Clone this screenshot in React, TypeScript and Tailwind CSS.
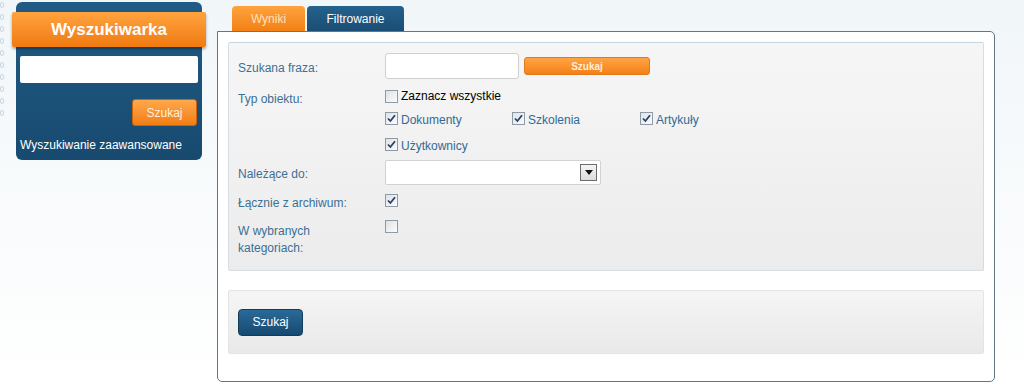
import React from "react";

function Box({ checked }: { checked?: boolean }) {
  return (
    <span className="inline-flex h-[13px] w-[13px] shrink-0 items-center justify-center border border-[#8e9aa4] bg-gradient-to-br from-[#dfe3e6] to-[#fbfbfb]">
      {checked && (
        <svg width="9" height="9" viewBox="0 0 9 9">
          <path d="M1 4.5 L3.4 7 L8 1.2" fill="none" stroke="#27406b" strokeWidth="1.8" />
        </svg>
      )}
    </span>
  );
}

function Check({ label, checked, dark }: { label: string; checked?: boolean; dark?: boolean }) {
  return (
    <div className="flex h-[16px] items-center gap-[3px]">
      <Box checked={checked} />
      <span className={dark ? "text-[12px] text-black" : "text-[12px] text-[#2f6a96] pt-[3px]"}>{label}</span>
    </div>
  );
}

export default function App() {
  return (
    <div className="flex h-[384px] w-[1024px] items-start overflow-hidden bg-gradient-to-b from-[#f1f6f9] to-white font-['Liberation_Sans',Arial,sans-serif]">
      {/* faint side decoration */}
      <div className="flex w-[5px] flex-col gap-[6px] pt-[2px]">
        {[0, 1, 2, 3, 4, 5, 6, 7, 8, 9].map((i) => (
          <span key={i} className="h-[6px] w-[4px] rounded-[2px] border border-[#c9d7e2]" />
        ))}
      </div>

      {/* search widget */}
      <div className="ml-[11px] mt-[2px] flex h-[158px] w-[186px] flex-col rounded-[6px] bg-gradient-to-b from-[#215b85] to-[#184a6f] pt-[10px]">
        <div className="-mx-[4px] flex h-[35px] items-center justify-center rounded-[2px] bg-gradient-to-b from-[#ffa33c] to-[#f07a0c] shadow-[0_2px_3px_rgba(0,0,0,0.35)]">
          <span className="text-[17px] font-bold text-white">Wyszukiwarka</span>
        </div>
        <div className="mx-[4px] mt-[9px] h-[27px] rounded-[2px] bg-white" />
        <div className="mr-[5px] mt-[16px] flex h-[27px] w-[65px] items-center justify-center self-end rounded-[3px] border border-[#c9620a] bg-gradient-to-b from-[#ffa84a] to-[#f27d10]">
          <span className="text-[12px] text-[#fff1dc]">Szukaj</span>
        </div>
        <div className="ml-[4px] mt-[12px] text-[12px] leading-[14px] text-white">Wyszukiwanie zaawansowane</div>
      </div>

      {/* main area */}
      <div className="ml-[15px] flex w-[778px] flex-col">
        <div className="flex h-[31px] items-end gap-[2px] pl-[15px]">
          <div className="flex h-[25px] w-[73px] items-center justify-center rounded-t-[4px] bg-gradient-to-b from-[#ffa33c] to-[#f28012]">
            <span className="text-[12px] text-[#fde2bb]">Wyniki</span>
          </div>
          <div className="flex h-[25px] w-[97px] items-center justify-center rounded-t-[4px] bg-gradient-to-b from-[#24628e] to-[#1a4d74]">
            <span className="text-[12px] text-white">Filtrowanie</span>
          </div>
        </div>

        <div className="flex h-[351px] flex-col rounded-tr-[5px] rounded-b-[5px] border border-[#607786] bg-white p-[10px]">
          <div className="flex h-[229px] flex-col rounded-[2px] border border-[#d6dde2] border-t-[#c4d6e2] bg-gradient-to-b from-[#f6f6f6] to-[#ececec] pl-[9px] pt-[10px] text-[12px] text-[#3d6f93]">
            {/* szukana fraza */}
            <div className="flex h-[26px] items-center">
              <div className="w-[147px] pt-[3px]">Szukana fraza:</div>
              <div className="h-[26px] w-[134px] rounded-[3px] border border-[#cfcfcf] bg-white" />
              <div className="ml-[5px] flex h-[18px] w-[126px] items-center justify-center rounded-[3px] border border-[#e07a1a] bg-gradient-to-b from-[#ffa442] to-[#f58014]">
                <span className="text-[10px] font-bold text-[#fff0d8]">Szukaj</span>
              </div>
            </div>

            {/* typ obiektu */}
            <div className="mt-[9px] flex h-[16px] items-start">
              <div className="w-[147px] pt-[3px] leading-[17px]">Typ obiektu:</div>
              <Check label="Zaznacz wszystkie" dark />
            </div>
            <div className="mt-[6px] flex h-[16px] pl-[147px]">
              <div className="w-[127px]">
                <Check label="Dokumenty" checked />
              </div>
              <div className="w-[128px]">
                <Check label="Szkolenia" checked />
              </div>
              <Check label="Artykuły" checked />
            </div>
            <div className="mt-[10px] flex h-[16px] pl-[147px]">
              <Check label="Użytkownicy" checked />
            </div>

            {/* nalezace do */}
            <div className="mt-[8px] flex h-[25px] items-center">
              <div className="w-[147px] pt-[2px]">Należące do:</div>
              <div className="flex h-[25px] w-[216px] items-center justify-end rounded-[2px] border border-[#d2d2d2] bg-white pr-[3px]">
                <div className="flex h-[17px] w-[17px] items-center justify-center border border-[#6b6b6b] bg-gradient-to-b from-[#f4f4f4] to-[#dcdcdc]">
                  <svg width="8" height="5" viewBox="0 0 8 5">
                    <path d="M0 0 H8 L4 5 Z" fill="#111" />
                  </svg>
                </div>
              </div>
            </div>

            {/* archiwum */}
            <div className="mt-[5px] flex h-[28px] items-start">
              <div className="w-[147px] pt-[5px] leading-[17px]">Łącznie z archiwum:</div>
              <div className="mt-[2px]">
                <Box checked />
              </div>
            </div>

            {/* kategorie */}
            <div className="flex items-start">
              <div className="w-[147px] pt-[5px] leading-[17px]">
                W wybranych
                <br />
                kategoriach:
              </div>
              <div className="mt-[2px]">
                <Box />
              </div>
            </div>
          </div>

          <div className="mt-[19px] flex h-[64px] items-center rounded-[2px] border border-[#e4e4e4] bg-gradient-to-b from-[#f5f5f5] to-[#e9e9e9] pl-[9px]">
            <div className="flex h-[27px] w-[65px] items-center justify-center rounded-[4px] border border-[#123c5c] bg-gradient-to-b from-[#2a6a98] to-[#174a70]">
              <span className="text-[12px] text-white">Szukaj</span>
            </div>
          </div>
        </div>
      </div>
    </div>
  );
}
